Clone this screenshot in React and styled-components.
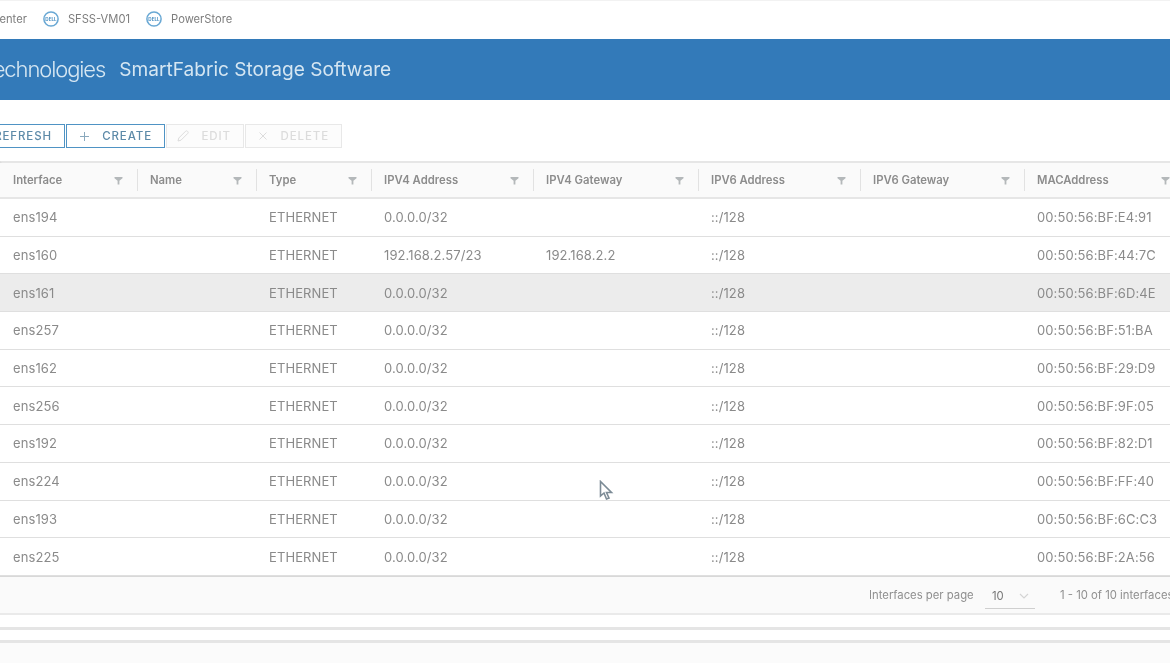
import React from "react";
import styled, { createGlobalStyle } from "styled-components";

const GlobalStyle = createGlobalStyle`
	html, body {
		margin: 0;
		padding: 0;
		background: #fff;
		font-family: "Inter", "Open Sans", sans-serif;
	}
`;

const COLUMNS = "137px 119px 115px 162px 165px 162px 164px 160px";

const headers = [
	"Interface",
	"Name",
	"Type",
	"IPV4 Address",
	"IPV4 Gateway",
	"IPV6 Address",
	"IPV6 Gateway",
	"MACAddress",
];

const rows = [
	["ens194", "0.0.0.0/32", "", "00:50:56:BF:E4:91"],
	["ens160", "192.168.2.57/23", "192.168.2.2", "00:50:56:BF:44:7C"],
	["ens161", "0.0.0.0/32", "", "00:50:56:BF:6D:4E"],
	["ens257", "0.0.0.0/32", "", "00:50:56:BF:51:BA"],
	["ens162", "0.0.0.0/32", "", "00:50:56:BF:29:D9"],
	["ens256", "0.0.0.0/32", "", "00:50:56:BF:9F:05"],
	["ens192", "0.0.0.0/32", "", "00:50:56:BF:82:D1"],
	["ens224", "0.0.0.0/32", "", "00:50:56:BF:FF:40"],
	["ens193", "0.0.0.0/32", "", "00:50:56:BF:6C:C3"],
	["ens225", "0.0.0.0/32", "", "00:50:56:BF:2A:56"],
];

const DellIcon = () => (
	<svg width='16' height='16' viewBox='0 0 16 16'>
		<circle cx='8' cy='8' r='7.1' fill='none' stroke='#69a8d4' strokeWidth='1.5' />
		<text x='8' y='9.7' textAnchor='middle' fontSize='4.6' fontWeight='700' fill='#4a8fc2'>
			DELL
		</text>
	</svg>
);

const FilterIcon = () => (
	<svg width='9' height='9' viewBox='0 0 9 9'>
		<path d='M0.5 1H8.5V2.2L5.4 4.8V8.5H3.6V4.8L0.5 2.2Z' fill='#b4b8ba' />
	</svg>
);

const PencilIcon = () => (
	<svg width='12' height='12' viewBox='0 0 12 12' fill='none' stroke='#dcdcdc' strokeWidth='1'>
		<path d='M1 11L1.8 8L8.6 1.2C9.1 .7 9.9 .7 10.4 1.2L10.8 1.6C11.3 2.1 11.3 2.9 10.8 3.4L4 10.2Z' />
	</svg>
);

const PlusIcon = () => (
	<svg width='9' height='9' viewBox='0 0 9 9' stroke='#8aa9bd' strokeWidth='1'>
		<path d='M4.5 0V9M0 4.5H9' />
	</svg>
);

const CloseIcon = () => (
	<svg width='8' height='8' viewBox='0 0 8 8' stroke='#dcdcdc' strokeWidth='1'>
		<path d='M.5 .5L7.5 7.5M7.5 .5L.5 7.5' />
	</svg>
);

const ChevronIcon = () => (
	<svg width='10' height='6' viewBox='0 0 10 6' fill='none' stroke='#d4d4d4' strokeWidth='1.1'>
		<path d='M1 1L5 5L9 1' />
	</svg>
);

const App = () => {
	return (
		<Page>
			<GlobalStyle />
			<TopNav>
				<NavItem>
					<DellIcon />
					vCenter
				</NavItem>
				<NavItem>
					<DellIcon />
					SFSS-VM01
				</NavItem>
				<NavItem>
					<DellIcon />
					PowerStore
				</NavItem>
			</TopNav>
			<Banner>
				<Brand>Dell Technologies</Brand>
				<Product>SmartFabric Storage Software</Product>
			</Banner>
			<Toolbar>
				<ToolButton $active $width={90}>
					REFRESH
				</ToolButton>
				<ToolButton $active $width={99}>
					<PlusIcon />
					CREATE
				</ToolButton>
				<ToolButton $width={78}>
					<PencilIcon />
					EDIT
				</ToolButton>
				<ToolButton $width={97}>
					<CloseIcon />
					DELETE
				</ToolButton>
			</Toolbar>
			<Table>
				<HeadRow>
					{headers.map((name) => (
						<HeadCell key={name}>
							{name}
							<FilterSlot>
								<FilterIcon />
							</FilterSlot>
						</HeadCell>
					))}
				</HeadRow>
				{rows.map(([name, ipv4, gateway, mac]) => (
					<Row key={name} $selected={name === "ens161"}>
						<Cell>{name}</Cell>
						<Cell />
						<Cell>ETHERNET</Cell>
						<Cell>{ipv4}</Cell>
						<Cell>{gateway}</Cell>
						<Cell>::/128</Cell>
						<Cell />
						<Cell>{mac}</Cell>
					</Row>
				))}
			</Table>
			<Footer>
				<FooterLabel>Interfaces per page</FooterLabel>
				<PageSelect>
					10
					<ChevronIcon />
				</PageSelect>
				<FooterCount>1 - 10 of 10 interfaces</FooterCount>
			</Footer>
			<Rule $gap={12} />
			<Rule $gap={10} />
			<Tail />
			<Cursor width='16' height='22' viewBox='0 0 16 22'>
				<path
					d='M1.5 1.5V16L5 13L7.5 19L10 18L7.5 12.5H12.5Z'
					fill='#fff'
					stroke='#7c8b96'
					strokeWidth='1.6'
				/>
			</Cursor>
		</Page>
	);
};

const Page = styled.div`
	position: relative;
	width: 1170px;
	height: 663px;
	overflow: hidden;
	background: #fff;
	filter: blur(0.45px);
`;

const TopNav = styled.div`
	display: flex;
	align-items: center;
	gap: 16px;
	height: 39px;
	padding-bottom: 2px;
	margin-left: -40px;
	box-sizing: border-box;
	border-top: 1px solid #f2f2f2;
`;

const NavItem = styled.div`
	display: flex;
	align-items: center;
	gap: 9px;
	font-size: 11.2px;
	color: #7d7d7d;
`;

const Banner = styled.div`
	display: flex;
	align-items: center;
	gap: 14px;
	box-sizing: border-box;
	height: 61px;
	padding-bottom: 2px;
	background: #337ab9;
	color: #d5e6f2;
	margin-left: -58px;
`;

const Brand = styled.div`
	font-size: 22px;
	font-weight: 300;
	letter-spacing: -1.1px;
	white-space: nowrap;
`;

const Product = styled.div`
	font-size: 19.1px;
	font-weight: 400;
	white-space: nowrap;
`;

const Toolbar = styled.div`
	display: flex;
	align-items: center;
	height: 24px;
	margin: 24px 0 13px -25px;
`;

const ToolButton = styled.div`
	display: flex;
	align-items: center;
	justify-content: flex-end;
	gap: 13px;
	box-sizing: border-box;
	width: ${(p) => p.$width}px;
	height: 24px;
	margin-right: 1px;
	padding-right: 12px;
	font-size: 11.5px;
	font-weight: 500;
	letter-spacing: 0.9px;
	color: ${(p) => (p.$active ? "#5d8aa8" : "#dcdcdc")};
	background: ${(p) => (p.$active ? "#fff" : "#fcfcfc")};
	border: 1px solid ${(p) => (p.$active ? "#4f93c4" : "#e8e8e8")};
`;

const Table = styled.div`
	border-top: 2px solid #e6e6e6;
	border-left: 2px solid #dcdcdc;
`;

const HeadRow = styled.div`
	display: grid;
	grid-template-columns: ${COLUMNS};
	margin-left: -2px;
	height: 34px;
	align-items: center;
	background: #fafafa;
	border-bottom: 2px solid #e6e6e6;
`;

const HeadCell = styled.div`
	position: relative;
	display: flex;
	align-items: center;
	height: 22px;
	padding-left: 12px;
	box-sizing: border-box;
	font-size: 11.3px;
	font-weight: 600;
	color: #8c8c8c;
	border-left: 1px solid #e2e2e2;

	&:first-child {
		border-left: none;
		padding-left: 13px;
	}
`;

const FilterSlot = styled.span`
	position: absolute;
	right: 14px;
	top: 7px;
	line-height: 0;
`;

const Row = styled.div`
	display: grid;
	grid-template-columns: ${COLUMNS};
	margin-left: -2px;
	height: 36.7px;
	align-items: center;
	background: ${(p) => (p.$selected ? "#ececec" : "#fff")};
	border-bottom: 1px solid #dfdfdf;
`;

const Cell = styled.div`
	padding-left: 13px;
	font-size: 13px;
	letter-spacing: 0.1px;
	color: #8a8a8a;
	white-space: nowrap;
`;

const Footer = styled.div`
	display: flex;
	align-items: center;
	height: 36px;
	padding-left: 869px;
	background: #fafafa;
	border-top: 1px solid #d8d8d8;
	border-bottom: 2px solid #eaeaea;
	font-size: 11.3px;
	color: #8f8f8f;
	white-space: nowrap;
`;

const FooterLabel = styled.span`
	flex: 0 0 116px;
`;

const PageSelect = styled.div`
	flex: 0 0 auto;
	display: flex;
	align-items: center;
	justify-content: space-between;
	box-sizing: border-box;
	width: 50px;
	height: 26px;
	padding: 2px 6px 0 7px;
	margin-top: 2px;
	border-bottom: 1px solid #cfcfcf;
	color: #777;
`;

const FooterCount = styled.span`
	flex: 0 0 auto;
	margin-left: 25px;
`;

const Rule = styled.div`
	height: 3px;
	margin-top: ${(p) => p.$gap}px;
	background: #e5e5e5;
`;

const Tail = styled.div`
	height: 24px;
	background: #fbfbfb;
`;

const Cursor = styled.svg`
	position: absolute;
	left: 599px;
	top: 480px;
`;

export default App;
